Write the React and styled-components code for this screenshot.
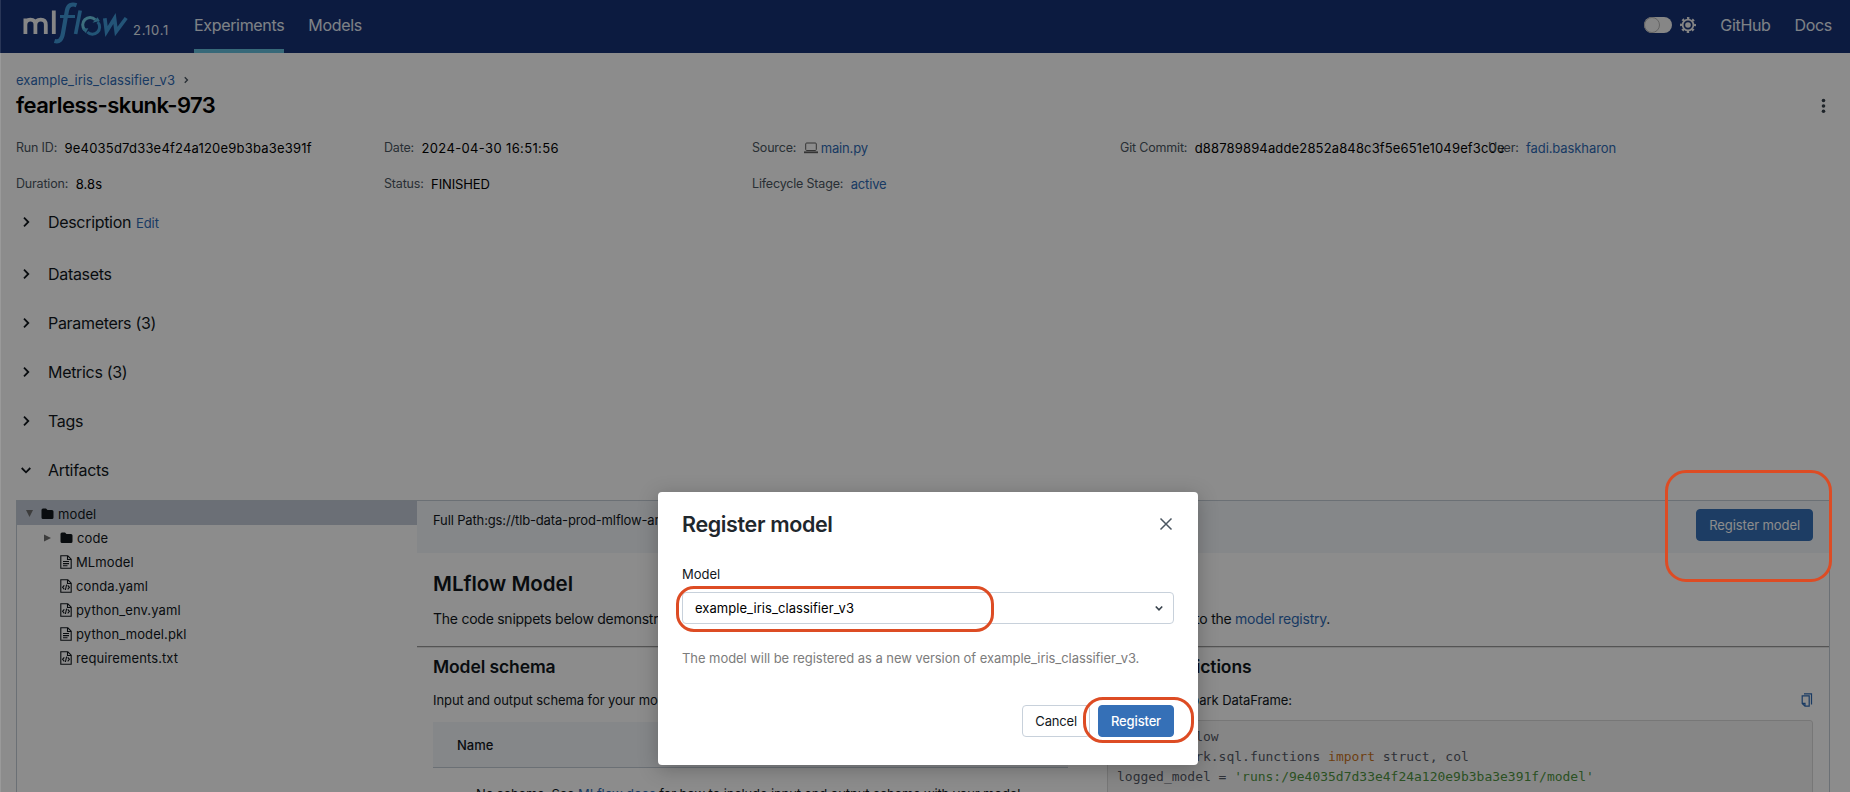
import React from "react";
import styled, { createGlobalStyle } from "styled-components";

const Global = createGlobalStyle`
  * { box-sizing: border-box; }
  html, body { margin: 0; padding: 0; height: 792px; overflow: hidden; background: #fff; }
  body { font-family: Inter, "Liberation Sans", sans-serif; font-size: 13px; line-height: 20px; color: #11171c; }
  svg { display: block; flex: none; }
`;

const link = "#2f6bb5";

const Page = styled.div`
  position: relative;
  width: 1850px;
  height: 792px;
  overflow: hidden;
  display: flex;
  flex-direction: column;
`;
const Header = styled.header`
  height: 53px;
  flex: none;
  display: flex;
  align-items: stretch;
  background: #173275;
  padding: 0 18px 0 20px;
  color: #e6edf5;
`;
const Brand = styled.div`
  display: flex;
  width: 174px;
`;
const Version = styled.span`
  font-size: 13px;
  letter-spacing: 0.75px;
  margin: 20px 0 0 1px;
`;
const NavLink = styled.a`
  font-size: 16px;
  line-height: 50px;
  letter-spacing: -0.33px;
  border-bottom: 4px solid ${(p) => (p.$active ? "#65bfdc" : "transparent")};
  height: 53px;
  margin-right: 24px;
  &:last-child { margin-right: 0; }
`;
const Spacer = styled.div`
  flex: 1;
`;
const ThemeToggle = styled.div`
  display: flex;
  align-items: center;
  gap: 7px;
  margin: 0 23px 3px 0;
`;
const Track = styled.div`
  width: 28px;
  height: 16px;
  border-radius: 8px;
  background: #f5f5f5;
`;
const Knob = styled.div`
  width: 16px;
  height: 16px;
  border-radius: 8px;
  border: 1px solid #b5b5b5;
`;

const Main = styled.main`
  padding: 17px 20px 0 16px;
  display: flex;
  flex-direction: column;
`;
const Crumb = styled.div`
  display: flex;
  align-items: center;
  gap: 6px;
  height: 20px;
`;
const Link = styled.a`
  color: ${link};
  letter-spacing: ${(p) => p.$track || "inherit"};
`;
const TitleRow = styled.div`
  display: flex;
  justify-content: space-between;
  align-items: center;
  height: 30px;
  padding-right: 4px;
`;
const Title = styled.h1`
  margin: 0;
  font-size: 22px;
  font-weight: 600;
  letter-spacing: -0.55px;
  color: #000;
`;
const Meta = styled.div`
  display: grid;
  grid-template-columns: repeat(5, 368px);
  grid-auto-rows: 20px;
  row-gap: 16px;
  margin-top: 18px;
  width: 1814px;
  white-space: nowrap;
`;
const MetaItem = styled.div`
  display: flex;
  align-items: center;
  gap: 7.5px;
`;
const MetaLabel = styled.span`
  color: #4b5661;
  font-size: 12.5px;
  letter-spacing: -0.18px;
`;
const MetaValue = styled.span`
  display: flex;
  align-items: center;
  gap: 3px;
  color: ${(p) => (p.$link ? link : "#000")};
  letter-spacing: ${(p) => p.$track || "0"};
`;
const Sections = styled.div`
  margin-top: 16px;
`;
const Section = styled.div`
  display: flex;
  align-items: center;
  height: 24px;
  margin-bottom: ${(p) => p.$gap || 25}px;
  padding-left: 2px;
  font-size: 16px;
  letter-spacing: -0.32px;
`;
const SectionIcon = styled.span`
  width: 30px;
`;
const EditLink = styled.a`
  color: ${link};
  font-size: 13px;
  margin: 2px 0 0 5px;
  letter-spacing: -0.1px;
`;

const Artifacts = styled.div`
  display: flex;
  width: 1814px;
  height: 320px;
  border: 1px solid #c4ccd6;
  border-bottom: 0;
  margin-top: -7px;
`;
const Tree = styled.div`
  width: 400px;
  flex: none;
`;
const TreeRow = styled.div`
  display: flex;
  align-items: center;
  height: 24px;
  padding: 1px 0 0 ${(p) => (p.$depth ? 26 : 8)}px;
  background: ${(p) => (p.$selected ? "#c3cbd7" : "transparent")};
  letter-spacing: 0.1px;
`;
const Twisty = styled.span`
  width: ${(p) => (p.$depth ? 17 : 16)}px;
  display: flex;
`;
const FileName = styled.span`
  margin-left: 4px;
`;
const Detail = styled.div`
  flex: 1;
  display: flex;
  flex-direction: column;
  min-width: 0;
`;
const PathBar = styled.div`
  display: flex;
  justify-content: space-between;
  flex: none;
  height: 52px;
  background: #f3f6fa;
  padding: 8px 16px;
`;
const Button = styled.button`
  height: 32px;
  padding: 0 12px;
  border-radius: 4px;
  border: 1px solid ${(p) => (p.$primary ? "#3570b7" : "#c8d1db")};
  background: ${(p) => (p.$primary ? "#3570b7" : "#fff")};
  color: ${(p) => (p.$primary ? "#fff" : "#11171c")};
  font: ${(p) => (p.$bold ? 500 : 400)} 13px/20px Inter, sans-serif;
  letter-spacing: ${(p) => p.$track || "0"};
  white-space: nowrap;
`;
const FullPath = styled.div`
  line-height: 22px;
  letter-spacing: -0.14px;
`;
const Intro = styled.div`
  flex: none;
  padding: 15px 16px 0;
  height: 93px;
`;
const Heading = styled.h2`
  margin: 0;
  font-size: ${(p) => p.$size}px;
  font-weight: 600;
  line-height: ${(p) => p.$line || 32}px;
  letter-spacing: ${(p) => p.$track || "0"};
`;
const IntroText = styled.div`
  display: flex;
  justify-content: space-between;
  width: 897px;
  margin-top: 9px;
  font-size: 14px;
  white-space: nowrap;
  letter-spacing: -0.25px;
`;
const Rule = styled.hr`
  flex: none;
  margin: 0;
  width: 100%;
  border: 0;
  border-top: 1px solid #9a9a9a;
  border-bottom: 1px solid #e4e4e4;
`;
const Columns = styled.div`
  display: flex;
  flex: none;
  padding: 4px 16px 0;
  gap: 39px;
`;
const SchemaColumn = styled.div`
  width: 635px;
`;
const PredictColumn = styled.div`
  width: 706px;
`;
const Sub = styled.div`
  display: flex;
  justify-content: space-between;
  align-items: center;
  margin: 8px 0 12px;
  letter-spacing: -0.08px;
`;
const TableHead = styled.div`
  height: 46px;
  padding: 13px 24px;
  background: #f3f6fa;
  border-bottom: 1px solid #c4ccd6;
  font-weight: 500;
  letter-spacing: 0;
`;
const TableNote = styled.div`
  padding: 16px 43px;
  white-space: nowrap;
  letter-spacing: -0.13px;
`;
const Code = styled.pre`
  margin: -2px 0 0;
  padding: 6px 9px;
  height: 90px;
  background: #f5f5f5;
  border: 1px solid #d9d9d9;
  border-radius: 3px;
  font: 13px/20px "DejaVu Sans Mono", monospace;
  letter-spacing: -0.01px;
  color: #555a66;
`;
const Keyword = styled.span`
  color: #c9731c;
`;
const Str = styled.span`
  color: #4f9440;
`;

const Mask = styled.div`
  position: absolute;
  inset: 0;
  background: rgba(0, 0, 0, 0.45);
`;
const EdgeLine = styled.div`
  position: absolute;
  left: 0;
  top: 0;
  width: 1px;
  height: 792px;
  background: rgba(255, 255, 255, 0.12);
`;
const Dialog = styled.div`
  position: absolute;
  left: 658px;
  top: 492px;
  width: 540px;
  height: 273px;
  padding: 20px 24px 0;
  border-radius: 4px;
  background: #fff;
  box-shadow: 0 4px 20px rgba(0, 0, 0, 0.25);
  display: flex;
  flex-direction: column;
`;
const DialogHead = styled.div`
  display: flex;
  justify-content: space-between;
  align-items: center;
  height: 24px;
  padding-right: 1px;
  color: #1f272d;
`;
const Label = styled.label`
  margin-top: 28px;
  height: 20px;
`;
const Select = styled.div`
  display: flex;
  align-items: center;
  justify-content: space-between;
  height: 32px;
  margin-top: 8px;
  padding: 0 8px 0 12px;
  border: 1px solid #c8d1db;
  border-radius: 4px;
  color: #000;
  letter-spacing: 0.05px;
`;
const Hint = styled.p`
  margin: 24px 0 0;
  color: #7c7c7c;
  letter-spacing: -0.06px;
  white-space: nowrap;
`;
const Actions = styled.div`
  display: flex;
  justify-content: flex-end;
  gap: 8px;
  margin-top: 37px;
`;
const Ring = styled.div`
  position: absolute;
  left: ${(p) => p.$x}px;
  top: ${(p) => p.$y}px;
  width: ${(p) => p.$w}px;
  height: ${(p) => p.$h}px;
  border: 3px solid #dd4c24;
  border-radius: ${(p) => p.$r}px;
`;

const Logo = () => (
  <svg width="112" height="46" viewBox="0 0 112 46">
    <g fill="none" stroke="#f5f5f5" strokeWidth="3.8">
      <path d="M5.400 34V18.400M5.400 25c0-3.600 2-5.400 5-5.400s5 1.800 5 5.200V34M15.400 25c0-3.600 2.200-5.400 5.400-5.400s5 1.800 5 5.200V34" />
      <path d="M33.800 10.500V34" />
    </g>
    <g fill="none" stroke="#4199d9">
      <path d="M56.500 5.200c-5-1.800-8.400 0-9.500 5L43 33c-1 6.500-3.700 9.500-8.500 8" strokeWidth="4.200" />
      <path d="M40 16.500h15" strokeWidth="3" />
      <path d="M60.200 10.500L55.600 34" strokeWidth="3.600" />
    </g>
    <path d="M64.800 30a7 7 0 0 1 10.500-10.300" fill="none" stroke="#6fcbe6" strokeWidth="3" />
    <path d="M77.600 22a7 7 0 0 1-10.300 10" fill="none" stroke="#3f9bd8" strokeWidth="3" />
    <path d="M61.800 28.800l6.500-.600-2.500 4.800zM72.500 22.800l7.300-1.800-2.300-3.800z" fill="#4fb0dd" />
    <path d="M84.800 18.200l1.700 13.300 8-13 1.700 13 10-13.500" fill="none" stroke="#4199d9" strokeWidth="3.700" />
  </svg>
);

const Chevron = ({ down, size = 16, color = "#11171c", w = 1.8 }) => (
  <svg width={size} height={size} viewBox="0 0 16 16" fill="none" stroke={color} strokeWidth={w}>
    <path d={down ? "M3.700 6l4.300 4.300L12.300 6" : "M6 3.700L10.300 8 6 12.300"} />
  </svg>
);

const Gear = () => (
  <svg width="18" height="18" viewBox="0 0 18 18" fill="none" stroke="#f0f0f0">
    <circle cx="9" cy="9" r="5.400" strokeWidth="1.800" />
    <circle cx="9" cy="9" r="6.900" strokeWidth="2.200" strokeDasharray="2.400 3.019" strokeDashoffset="1.200" />
    <circle cx="9" cy="9" r="2.800" fill="#f0f0f0" stroke="none" />
  </svg>
);

const Folder = () => (
  <svg width="13" height="12" viewBox="0 0 13 12" fill="#11171c">
    <path d="M0.500 2A1.500 1.500 0 0 1 2 .5h3L6.500 2H11A1.500 1.500 0 0 1 12.500 3.500v6A1.500 1.500 0 0 1 11 11H2A1.500 1.500 0 0 1 .5 9.500z" />
  </svg>
);

const FileIcon = ({ code }) => (
  <svg width="12" height="14" viewBox="0 0 12 14" fill="none" stroke="#11171c" strokeWidth="1.100">
    <path d="M.8.800h7l3.400 3.400v9H.8zM7.500.800v3.700h3.700" />
    {code ? (
      <path d="M4.300 6.300L2.600 8.300l1.700 2M7.700 6.300l1.700 2-1.700 2M6.600 5.700L5.400 11" />
    ) : (
      <path d="M3 6.500h6M3 8.600h6M3 10.700h4.500" />
    )}
  </svg>
);

const Laptop = () => (
  <svg width="14" height="12" viewBox="0 0 14 12" fill="none" stroke="#5f5f5f">
    <rect x="1.700" y="1" width="10.600" height="7.500" rx="1" />
    <path d="M0 10.300h14" strokeWidth="1.800" />
  </svg>
);

const Triangle = ({ down }) => (
  <svg width="9" height="8" viewBox="0 0 9 8" fill="#707070">
    <path d={down ? "M1 0h7L4.500 7z" : "M1 .5l7 3.500-7 3.500z"} />
  </svg>
);

const CopyIcon = () => (
  <svg width="12" height="14" viewBox="0 0 12 14" fill="none" stroke={link} strokeWidth="1.200">
    <path d="M3 .800h7.500v10.700" />
    <path d="M1.200 2.800h7v10.400H4L1.200 10.400zM4 13v-2.600H1.200" />
  </svg>
);

const Close = () => (
  <svg width="14" height="14" viewBox="0 0 14 14" stroke="#4b5661" strokeWidth="1.500">
    <path d="M1.500 1.500l11 11M12.500 1.500l-11 11" />
  </svg>
);

const files = [
  ["MLmodel", false],
  ["conda.yaml", true],
  ["python_env.yaml", true],
  ["python_model.pkl", false],
  ["requirements.txt", true],
];

export default function App() {
  return (
    <Page>
      <Global />
      <Header>
        <Brand>
          <Logo />
          <Version>2.10.1</Version>
        </Brand>
        <NavLink $active>Experiments</NavLink>
        <NavLink>Models</NavLink>
        <Spacer />
        <ThemeToggle>
          <Track><Knob /></Track>
          <Gear />
        </ThemeToggle>
        <NavLink>GitHub</NavLink>
        <NavLink>Docs</NavLink>
      </Header>
      <Main>
        <Crumb>
          <Link $track="0.05px">example_iris_classifier_v3</Link>
          <Chevron size={10} w={2.2} color="#4b5661" />
        </Crumb>
        <TitleRow>
          <Title>fearless-skunk-973</Title>
          <svg width="5" height="15" viewBox="0 0 5 15" fill="#38424c">
            <circle cx="2.500" cy="2.500" r="1.800" /><circle cx="2.500" cy="8" r="1.800" /><circle cx="2.500" cy="13.200" r="1.800" />
          </svg>
        </TitleRow>
        <Meta>
          <MetaItem><MetaLabel>Run ID:</MetaLabel><MetaValue $track="0.2px">9e4035d7d33e4f24a120e9b3ba3e391f</MetaValue></MetaItem>
          <MetaItem><MetaLabel>Date:</MetaLabel><MetaValue $track="0.36px">2024-04-30 16:51:56</MetaValue></MetaItem>
          <MetaItem><MetaLabel>Source:</MetaLabel><MetaValue $link $track="-0.15px"><Laptop />main.py</MetaValue></MetaItem>
          <MetaItem><MetaLabel>Git Commit:</MetaLabel><MetaValue $track="0.15px">d88789894adde2852a848c3f5e651e1049ef3c0e</MetaValue></MetaItem>
          <MetaItem><MetaLabel>User:</MetaLabel><MetaValue $link $track="-0.1px">fadi.baskharon</MetaValue></MetaItem>
          <MetaItem><MetaLabel>Duration:</MetaLabel><MetaValue $track="0.1px">8.8s</MetaValue></MetaItem>
          <MetaItem><MetaLabel>Status:</MetaLabel><MetaValue $track="-0.12px">FINISHED</MetaValue></MetaItem>
          <MetaItem><MetaLabel>Lifecycle Stage:</MetaLabel><MetaValue $link $track="-0.15px">active</MetaValue></MetaItem>
        </Meta>
        <Sections>
          <Section $gap={28}><SectionIcon><Chevron /></SectionIcon>Description<EditLink>Edit</EditLink></Section>
          <Section><SectionIcon><Chevron /></SectionIcon>Datasets</Section>
          <Section><SectionIcon><Chevron /></SectionIcon>Parameters (3)</Section>
          <Section><SectionIcon><Chevron /></SectionIcon>Metrics (3)</Section>
          <Section><SectionIcon><Chevron /></SectionIcon>Tags</Section>
          <Section><SectionIcon><Chevron down /></SectionIcon>Artifacts</Section>
        </Sections>
        <Artifacts>
          <Tree>
            <TreeRow $selected><Twisty><Triangle down /></Twisty><Folder /><FileName>model</FileName></TreeRow>
            <TreeRow $depth><Twisty $depth><Triangle /></Twisty><Folder /><FileName>code</FileName></TreeRow>
            {files.map(([name, code]) => (
              <TreeRow key={name} $depth><Twisty $depth /><FileIcon code={code} /><FileName>{name}</FileName></TreeRow>
            ))}
          </Tree>
          <Detail>
            <PathBar>
              <FullPath>Full Path:gs://tlb-data-prod-mlflow-artifacts</FullPath>
              <Button $primary $track="-0.08px">Register model</Button>
            </PathBar>
            <Intro>
              <Heading $size={20.5}>MLflow Model</Heading>
              <IntroText>
                <span>The code snippets below demonstrate how</span>
                <span>to the <Link>model registry</Link>.</span>
              </IntroText>
            </Intro>
            <Rule />
            <Columns>
              <SchemaColumn>
                <Heading $size={17.5} $line={30} $track="-0.1px">Model schema</Heading>
                <Sub>Input and output schema for your model.</Sub>
                <TableHead>Name</TableHead>
                <TableNote>No schema. See <Link>MLflow docs</Link> for how to include input and output schema with your model.</TableNote>
              </SchemaColumn>
              <PredictColumn>
                <Heading $size={17.5} $line={30} $track="-0.1px">Make Predictions</Heading>
                <Sub>Predict on a Spark DataFrame:<CopyIcon /></Sub>
                <Code>
                  {"import mlflow\nfrom pyspark.sql.functions "}<Keyword>import</Keyword>{" struct, col\nlogged_model = "}
                  <Str>'runs:/9e4035d7d33e4f24a120e9b3ba3e391f/model'</Str>
                </Code>
              </PredictColumn>
            </Columns>
          </Detail>
        </Artifacts>
      </Main>
      <Mask />
      <EdgeLine />
      <Dialog>
        <DialogHead>
          <Heading $size={21.5} $track="-0.36px">Register model</Heading>
          <Close />
        </DialogHead>
        <Label>Model</Label>
        <Select>example_iris_classifier_v3<Chevron down size={12} w={2.200} color="#38424c" /></Select>
        <Hint>The model will be registered as a new version of example_iris_classifier_v3.</Hint>
        <Actions>
          <Button $track="-0.15px">Cancel</Button>
          <Button $primary $bold $track="-0.15px">Register</Button>
        </Actions>
      </Dialog>
      <Ring $x={676} $y={586} $w={318} $h={46} $r={18} />
      <Ring $x={1083} $y={697} $w={111} $h={46} $r={20} />
      <Ring $x={1665} $y={470} $w={167} $h={112} $r={21} />
    </Page>
  );
}
